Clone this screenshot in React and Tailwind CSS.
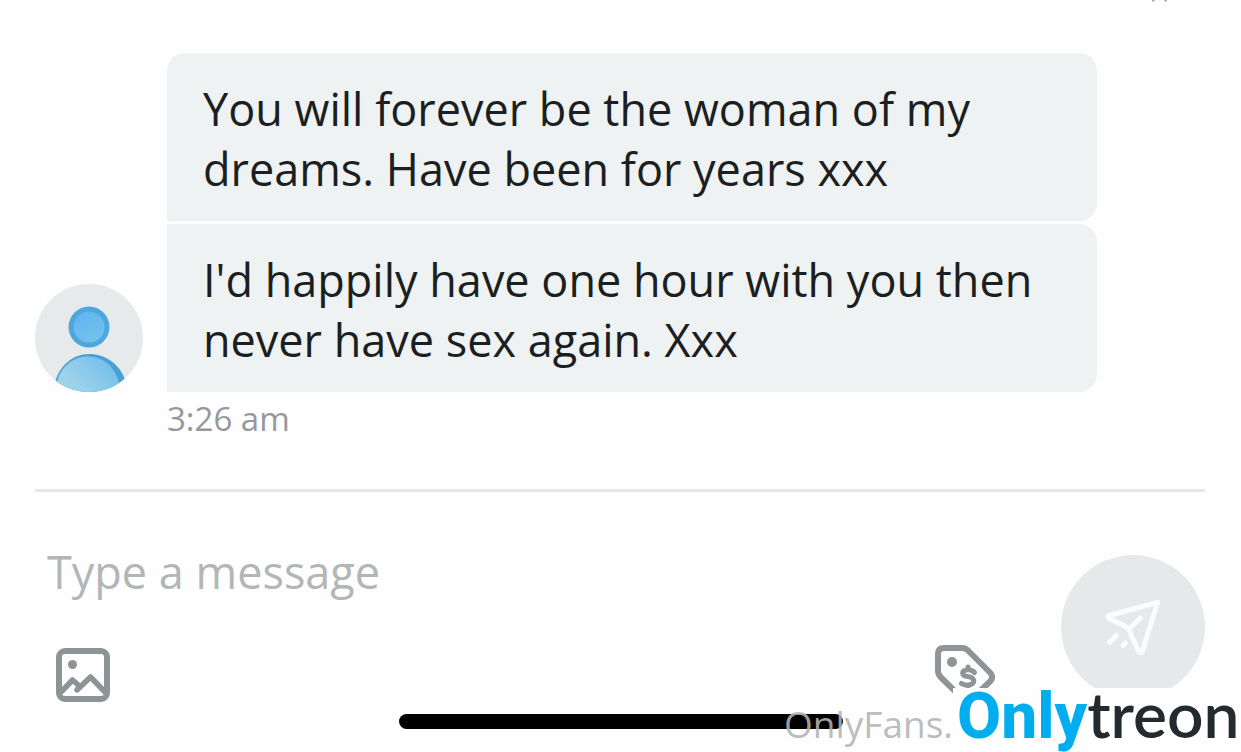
import React from "react";

const messages = [
  {
    id: 1,
    text: "You will forever be the woman of my dreams. Have been for years xxx",
    shape: "rounded-t-[18px] rounded-br-[18px]",
  },
  {
    id: 2,
    text: "I'd happily have one hour with you then never have sex again. Xxx",
    shape: "rounded-r-[18px]",
  },
];

const Avatar = () => (
  <svg
    viewBox="0 0 108 108"
    className="size-[108px] shrink-0"
    role="img"
    aria-label="User avatar"
  >
    <defs>
      <clipPath id="avatarClip">
        <circle cx="54" cy="54" r="54" />
      </clipPath>
      <linearGradient id="headFill" x1="0" y1="0" x2="0.4" y2="1">
        <stop offset="0" stopColor="#5fb4f0" />
        <stop offset="1" stopColor="#72c0ec" />
      </linearGradient>
      <linearGradient id="bodyFill" x1="0.9" y1="0" x2="0.2" y2="0.5">
        <stop offset="0" stopColor="#6dbdee" />
        <stop offset="1" stopColor="#9dd2e8" />
      </linearGradient>
    </defs>
    <g clipPath="url(#avatarClip)">
      <rect width="108" height="108" fill="#e6eaeb" />
      <circle cx="54" cy="43" r="20.5" fill="#4fa6dd" />
      <circle cx="54" cy="43" r="15.5" fill="url(#headFill)" />
      <path
        d="M20 98C25 81 38 70 54 70s31 10 36 26l-8 20H24Z"
        fill="#4a9fd3"
      />
      <path
        d="M21.500 99C26 82 38 72.500 53 72.500c15 0 26 9 31 26L78 116H26Z"
        fill="url(#bodyFill)"
      />
    </g>
  </svg>
);

const ImageIcon = () => (
  <svg
    viewBox="0 0 54 54"
    className="size-[54px]"
    fill="none"
    stroke="#8c9496"
    strokeWidth="6"
    strokeLinecap="round"
    strokeLinejoin="round"
    aria-hidden="true"
  >
    <rect x="3" y="3" width="48" height="48" rx="6" />
    <circle cx="16.500" cy="16.500" r="4.500" fill="#8c9496" stroke="none" />
    <path d="M5 44 16.500 32l7 6-2.500 4L34.500 29 49 44" strokeWidth="5.500" />
  </svg>
);

const TagIcon = () => (
  <svg
    viewBox="0 0 60 60"
    className="size-[60px]"
    fill="none"
    stroke="#8f9597"
    strokeWidth="6"
    strokeLinecap="round"
    strokeLinejoin="round"
    aria-hidden="true"
  >
    <path d="M9 3h18c2.500 0 4.500 1 6 2.500L55.500 28c2 2.500 2 5.500 0 8L36 55c-2 2-5 2-7 0L5.500 32C4 30.500 3 28.500 3 26V9c0-4 2-6 6-6Z" />
    <circle cx="17" cy="17" r="5" fill="#8f9597" stroke="none" />
    <path
      d="M39.500 27.500c-2-2.300-4-3-7-2.700-6.500.7-6.500 5.700 0 6.700 7.500 1 9 7.500 1 8.500-3.500.4-5 0-7-1.500M33 22v2M33 41v2"
      strokeWidth="5"
    />
  </svg>
);

const SendIcon = () => (
  <svg
    viewBox="0 0 56 56"
    className="size-[56px]"
    fill="none"
    stroke="#fafdfd"
    strokeWidth="5"
    strokeLinecap="round"
    strokeLinejoin="round"
    aria-hidden="true"
  >
    <path d="M52.500 3.500 4.500 16.500c-2 .6-2 2.300 0 3.300L19 26.500c5 2.500 6 5 7 9.500L34 52.500c1 2 2.800 1.700 3.500-.5Z" />
    <path d="M25 29 35.500 19" />
    <path d="M11.500 36.500 4.500 43.500M20.500 44l-2.500 2.500" />
  </svg>
);

const MessageGroup = () => (
  <section>
    <div className="flex items-end gap-6 pr-[108px]">
      <Avatar />
      <div className="flex flex-1 flex-col gap-[3px]">
        {messages.map((message) => (
          <p
            key={message.id}
            className={`bg-[#eef2f3] px-9 pt-[26px] pb-[22px] text-[45px] leading-[60px] text-[#1b1f21] ${message.shape}`}
          >
            {message.text}
          </p>
        ))}
      </div>
    </div>
    <time className="mt-[3px] block pl-[132px] text-[33px] leading-[48px] text-[#96999b]">
      3:26 am
    </time>
  </section>
);

const Composer = () => (
  <form
    className="mt-[46px] flex items-start border-t-3 border-[#e5e8ea] pt-12"
    onSubmit={(e) => e.preventDefault()}
  >
    <div className="flex-1 pl-3">
      <input
        type="text"
        aria-label="Type a message"
        placeholder="Type a message"
        className="block h-16 w-full bg-transparent text-[45px] text-[#1b1f21] outline-none placeholder:text-[#b3b6b7]"
      />
      <div className="flex items-start justify-between pt-[41px] pr-[66px] pl-[9px]">
        <button type="button" aria-label="Add image" className="mt-[3px]">
          <ImageIcon />
        </button>
        <button type="button" aria-label="Set price">
          <TagIcon />
        </button>
      </div>
    </div>
    <button
      type="submit"
      aria-label="Send"
      className="mt-[15px] flex size-36 shrink-0 items-center justify-center rounded-full bg-[#e6e9ea]"
    >
      <SendIcon />
    </button>
  </form>
);

const Watermark = () => (
  <div className="absolute right-0 bottom-0 flex h-16 items-end">
    <span className="text-[37px] leading-[56px] text-[#b4b4b4]/90">
      OnlyFans.
    </span>
    <p className="h-16 w-72 bg-[#fefefe] pl-1 text-[64px] leading-[52px] whitespace-nowrap">
      <span className="font-['Roboto'] font-extrabold text-[#00aeef]">
        Only
      </span>
      <span className="font-['Lato'] font-semibold text-[#232b2f]">treon</span>
    </p>
  </div>
);

export default function App() {
  return (
    <main className="relative min-h-screen overflow-hidden bg-[#fefefe] pt-[53px] pr-9 pl-[35px] font-['Open_Sans',sans-serif]">
      <svg
        viewBox="0 0 18 2"
        className="absolute top-0 right-[73px] h-[2px] w-[18px]"
        aria-hidden="true"
      >
        <path d="M2 0h3l-1 1.500H2ZM14 0h3v1.500h-2Z" fill="#a5a8a9" />
      </svg>
      <MessageGroup />
      <Composer />
      <div className="absolute inset-x-0 bottom-[23px] flex justify-center">
        <div className="h-[15px] w-[444px] rounded-full bg-black" />
      </div>
      <Watermark />
    </main>
  );
}
